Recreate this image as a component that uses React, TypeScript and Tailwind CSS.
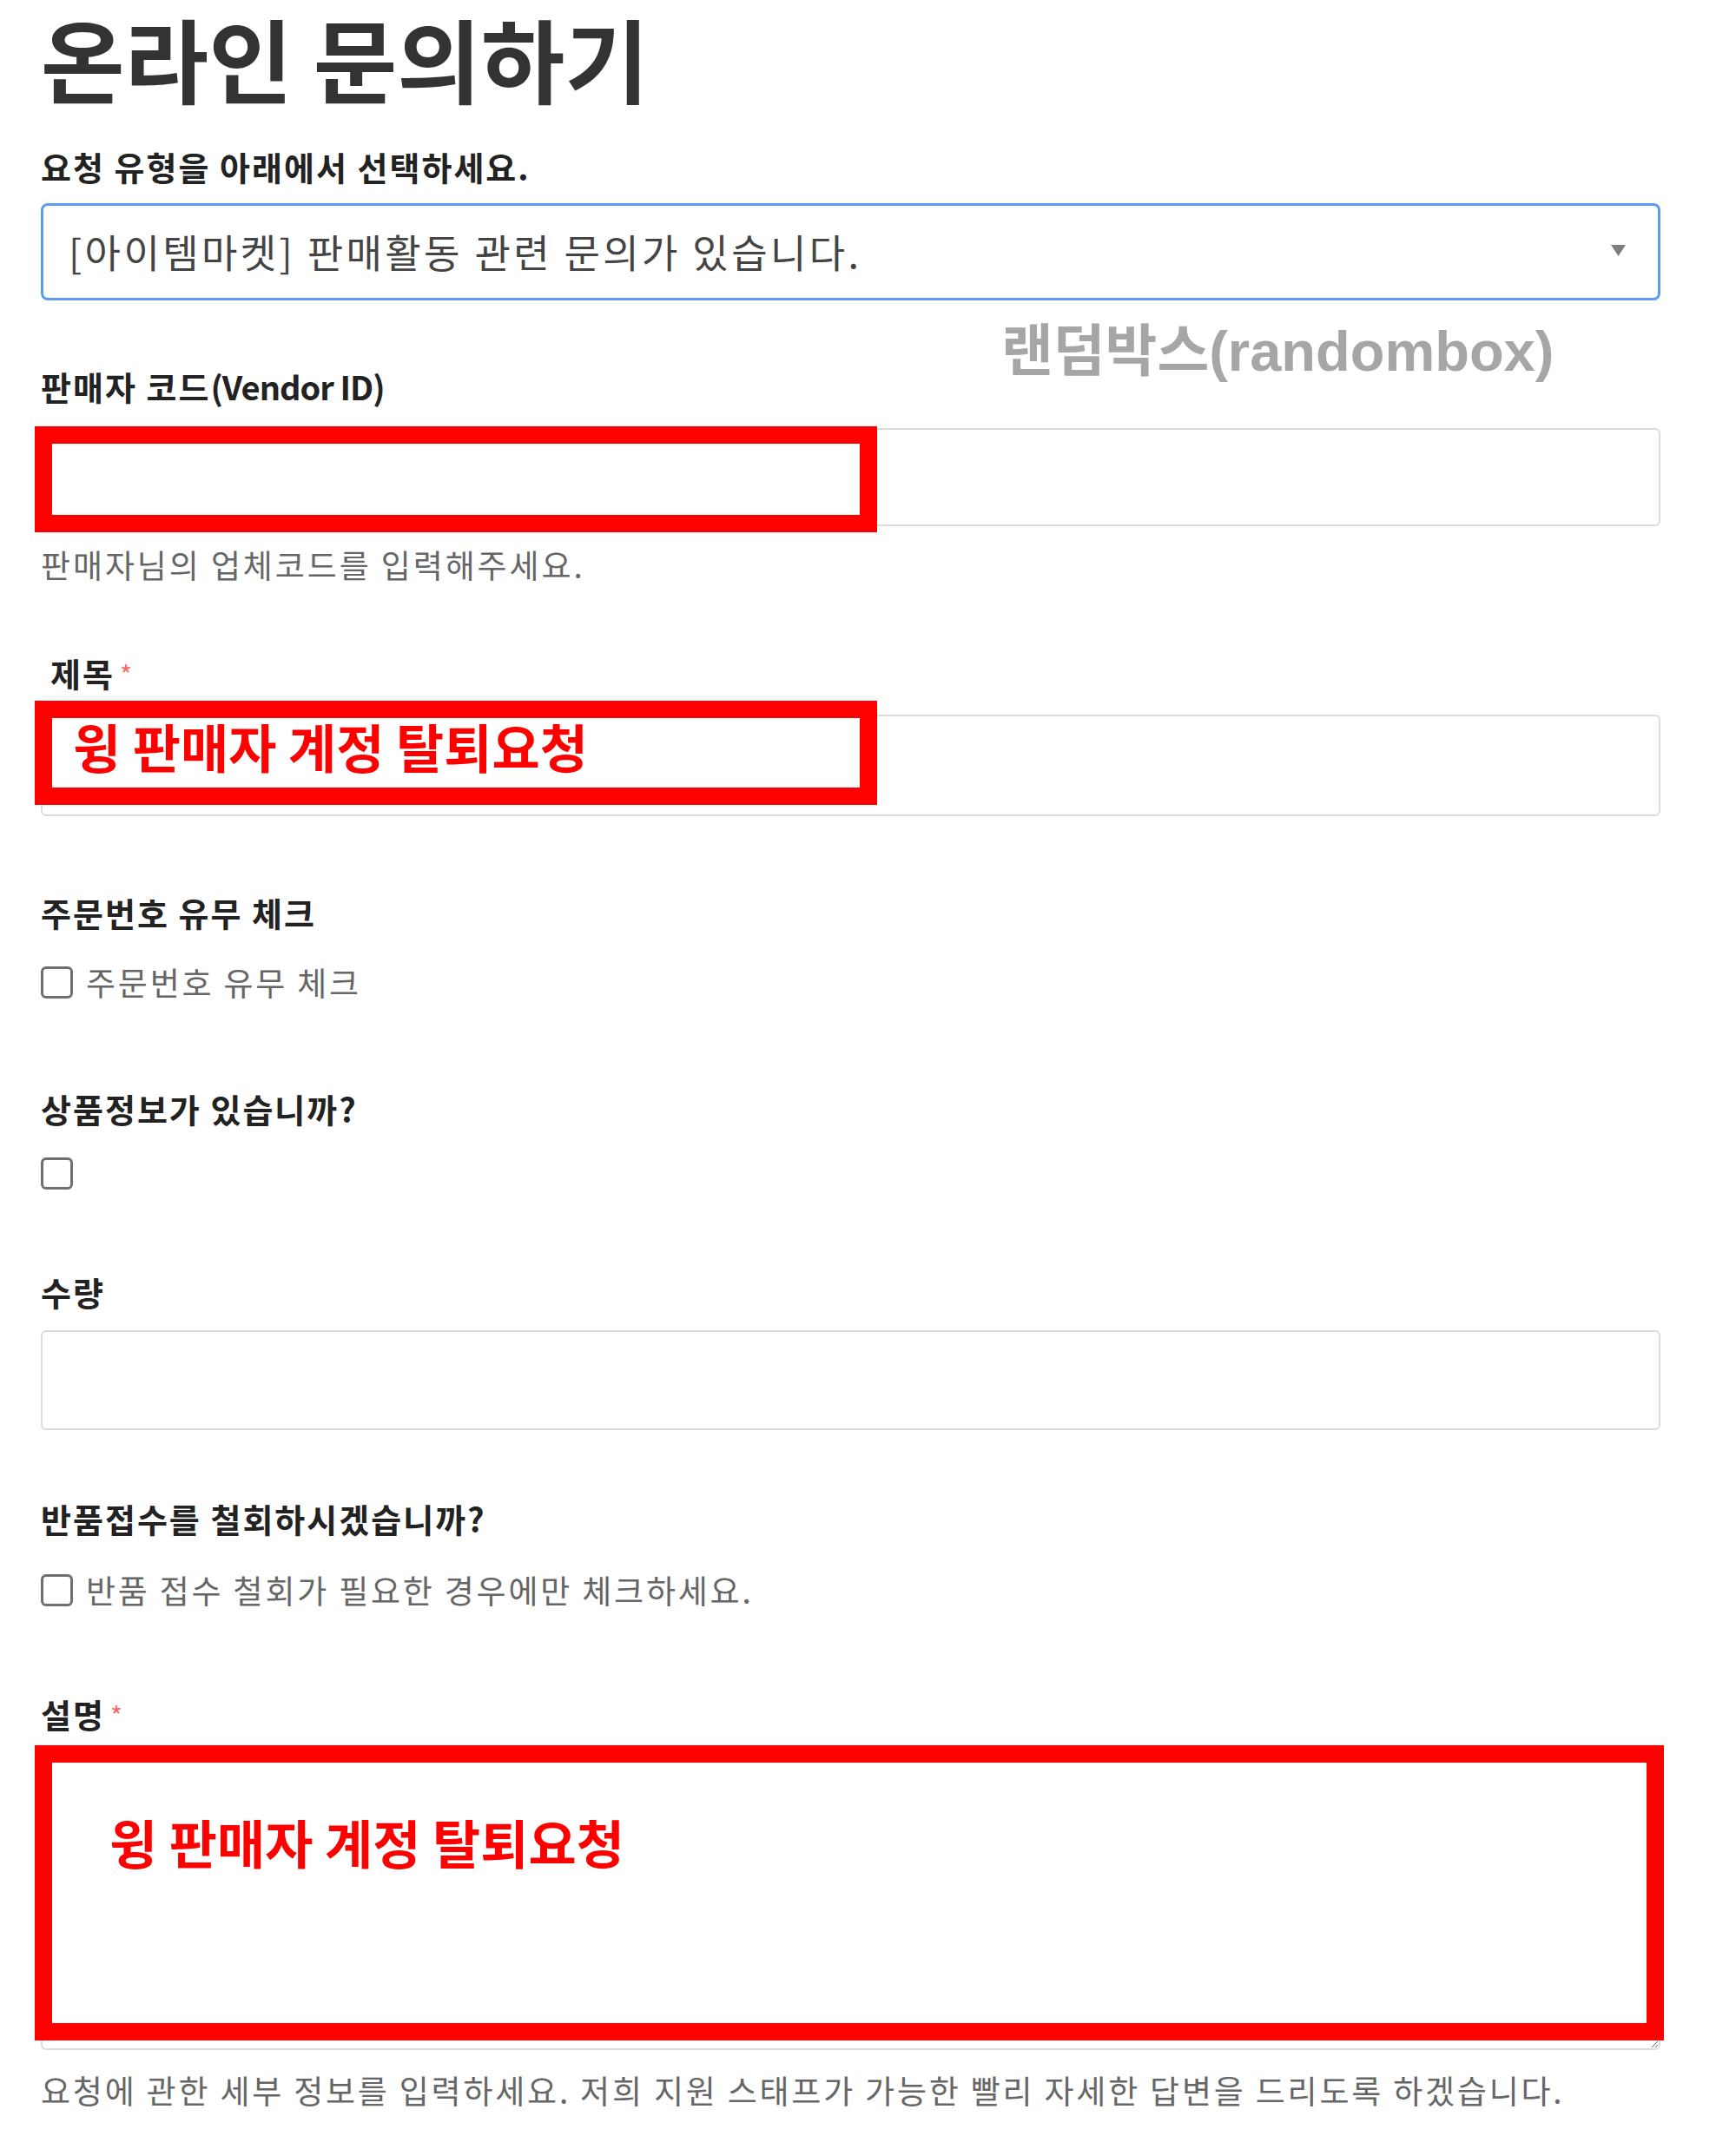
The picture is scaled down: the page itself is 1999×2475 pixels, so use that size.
import React from "react";

function RedBox({ className, children }: { className: string; children?: React.ReactNode }) {
  return (
    <div className={"pointer-events-none absolute border-[20px] border-[#ff0000] " + className}>
      {children}
    </div>
  );
}

function Label({ children, className = "" }: { children: React.ReactNode; className?: string }) {
  return (
    <div className={"block text-[38px] font-bold leading-[44px] tracking-[2px] text-[#222] " + className}>
      {children}
    </div>
  );
}

function Star() {
  return <span className="relative -top-[2px] ml-[6px] text-[30px] font-normal text-[#f56b6b]">*</span>;
}

function Check({ text }: { text?: string }) {
  return (
    <label className="flex h-[44px] items-center gap-[15px]">
      <input
        type="checkbox"
        className="h-[37px] w-[37px] shrink-0 appearance-none rounded-[6px] border-[3px] border-[#707070] bg-white"
      />
      {text && <span className="text-[37px] leading-[44px] tracking-[2.8px] text-[#666]">{text}</span>}
    </label>
  );
}

export default function App() {
  return (
    <div className="min-h-[2475px] bg-white pl-[47px] pr-[87px] font-['Noto_Sans_CJK_KR','Noto_Sans_CJK_SC',sans-serif]">
      <h1 className="text-[105px] font-bold leading-[130px] text-[#333]">온라인 문의하기</h1>

      <Label className="mt-[40px] tracking-[1.5px]">요청 유형을 아래에서 선택하세요.</Label>
      <div className="relative mt-[20px]">
        <div className="flex h-[112px] items-center rounded-[8px] border-[3px] border-[#5b9bf1] pl-[29px] text-[45px] tracking-[3.4px] text-[#444]">
          [아이템마켓] 판매활동 관련 문의가 있습니다.
        </div>
        <svg className="absolute right-[40px] top-[48px]" width="17" height="13" viewBox="0 0 17 13">
          <polygon points="0,0 17,0 8.5,13" fill="#7f7f7f" />
        </svg>
        <div className="pointer-events-none absolute left-[1106px] top-[135px] whitespace-nowrap font-['Liberation_Sans','Noto_Sans_CJK_KR',sans-serif] text-[65px] font-bold leading-[72px] text-[#a6a6a6]">
          랜덤박스(randombox)
        </div>
      </div>

      <Label className="mt-[77px]">
        판매자 코드<span className="tracking-[-1px]">(Vendor ID)</span>
      </Label>
      <div className="relative mt-[26px]">
        <input className="block h-[113px] w-full rounded-[6px] border-2 border-[#dcdcdc] bg-white px-[28px] text-[36px] outline-none" />
        <RedBox className="-left-[7px] -top-[2px] h-[122px] w-[970px]" />
      </div>
      <div className="mt-[22px] text-[37px] leading-[44px] tracking-[2.9px] text-[#666]">판매자님의 업체코드를 입력해주세요.</div>

      <Label className="mt-[81px] pl-[11px]">
        제목
        <Star />
      </Label>
      <div className="relative mt-[23px]">
        <input className="block h-[117px] w-full rounded-[6px] border-2 border-[#dcdcdc] bg-white px-[28px] text-[36px] outline-none" />
        <RedBox className="-left-[7px] -top-[16px] h-[120px] w-[970px]">
          <span className="absolute left-[24px] top-[2px] whitespace-nowrap text-[60px] font-bold leading-[60px] text-[#ff0000]">
            윙 판매자 계정 탈퇴요청
          </span>
        </RedBox>
      </div>

      <Label className="mt-[89px]">주문번호 유무 체크</Label>
      <div className="mt-[36px]">
        <Check text="주문번호 유무 체크" />
      </div>

      <Label className="mt-[102px]">상품정보가 있습니까?</Label>
      <div className="mt-[30px]">
        <Check />
      </div>

      <Label className="mt-[93px]">수량</Label>
      <div className="mt-[22px]">
        <input className="block h-[115px] w-full rounded-[6px] border-2 border-[#dcdcdc] bg-white px-[28px] text-[36px] outline-none" />
      </div>

      <Label className="mt-[80px]">반품접수를 철회하시겠습니까?</Label>
      <div className="mt-[38px]">
        <Check text="반품 접수 철회가 필요한 경우에만 체크하세요." />
      </div>

      <Label className="mt-[99px]">
        설명
        <Star />
      </Label>
      <div className="relative mt-[22px]">
        <textarea className="block h-[340px] w-full rounded-[6px] border-2 border-[#dcdcdc] bg-white px-[28px] text-[36px] outline-none" />
        <RedBox className="-left-[7px] -top-[11px] h-[340px] w-[1876px]">
          <span className="absolute left-[66px] top-[61px] whitespace-nowrap text-[60px] font-bold leading-[60px] text-[#ff0000]">
            윙 판매자 계정 탈퇴요청
          </span>
        </RedBox>
      </div>
      <div className="mt-[24px] text-[37px] leading-[44px] tracking-[2.8px] text-[#666]">
        요청에 관한 세부 정보를 입력하세요. 저희 지원 스태프가 가능한 빨리 자세한 답변을 드리도록 하겠습니다.
      </div>
    </div>
  );
}
